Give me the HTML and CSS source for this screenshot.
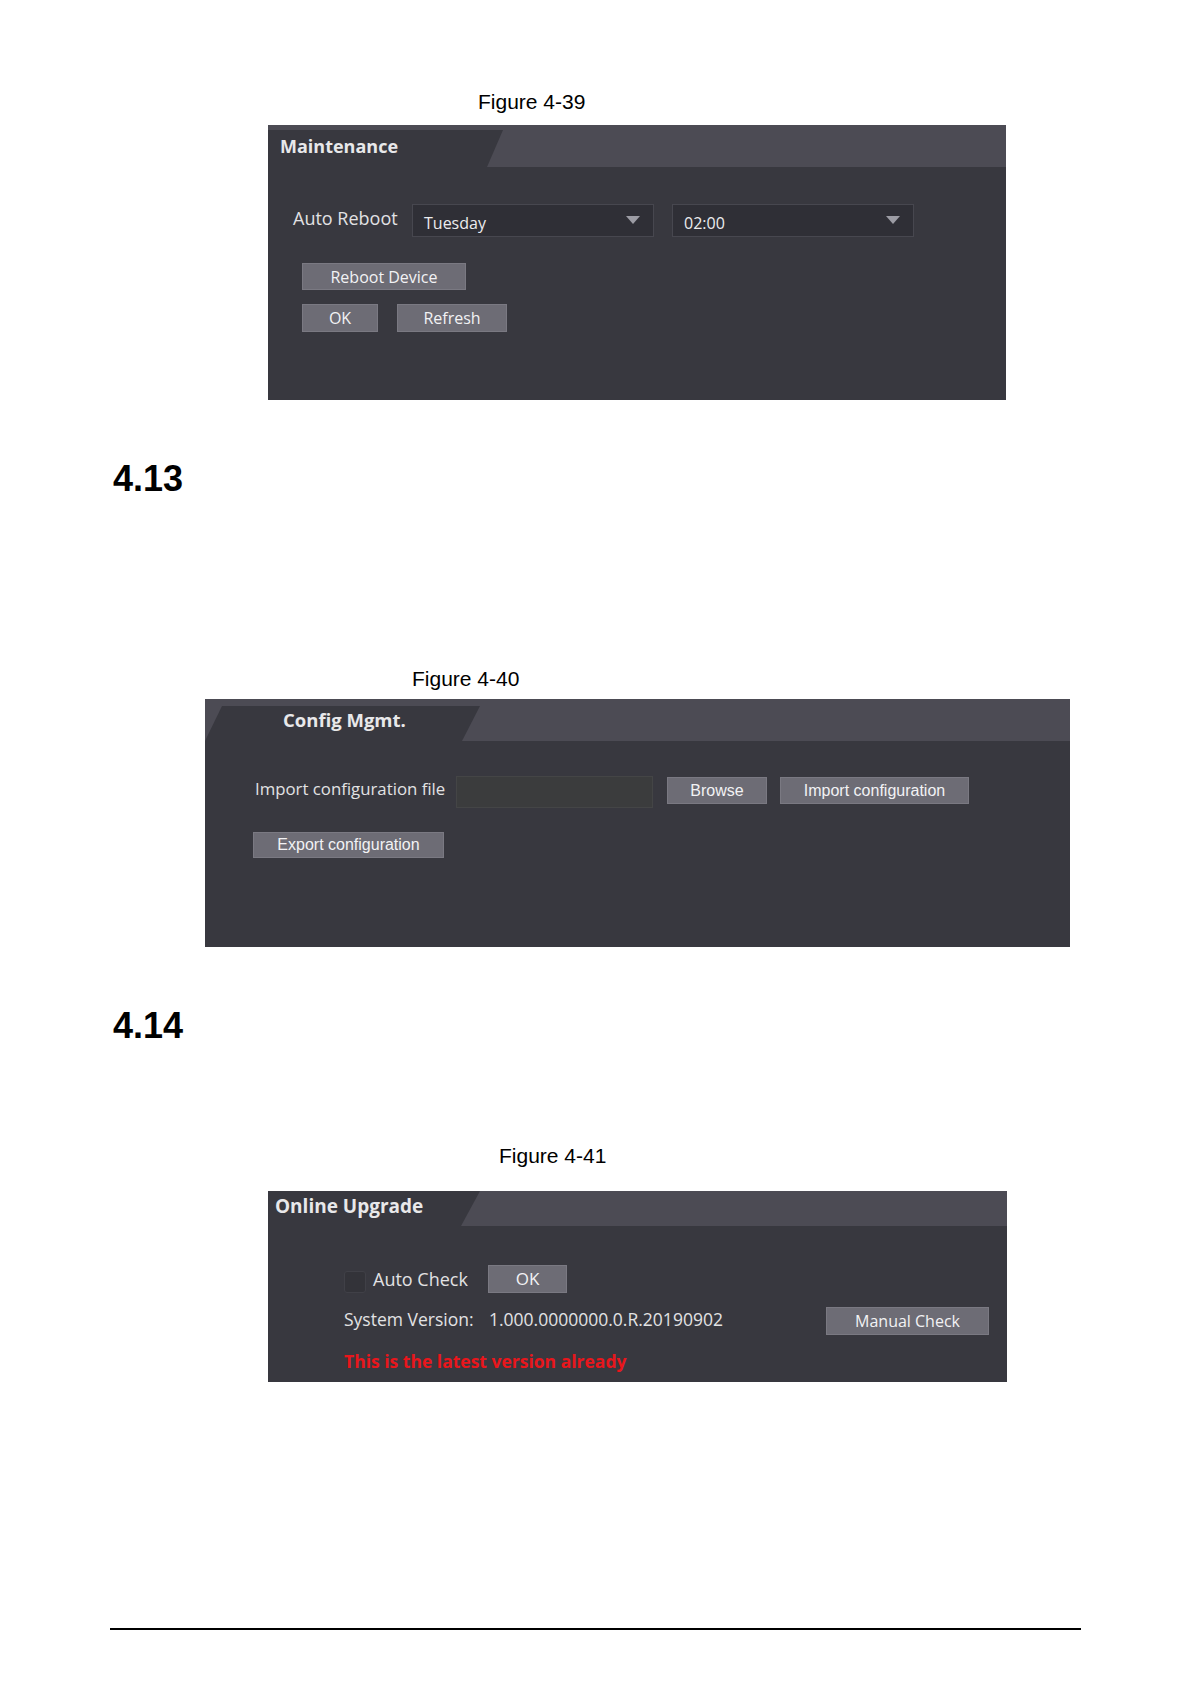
FILE: index.html
```html
<!DOCTYPE html>
<html lang="en">
<head>
<meta charset="utf-8">
<title>Maintenance / Config / Upgrade</title>
<link rel="stylesheet" href="styles.css">
</head>
<body>
<div class="page">
  <p class="caption cap-39">Figure 4-39</p>
  <section class="panel panel-maint">
    <div class="panel-head head-maint">
      <div class="tab tab-maint"><span class="title">Maintenance</span></div>
    </div>
    <div class="panel-body body-maint">
      <div class="row">
        <span class="label label-reboot">Auto Reboot</span>
        <div class="select"><span class="select-text">Tuesday</span><span class="arrow"></span></div>
        <div class="select select-time"><span class="select-text">02:00</span><span class="arrow"></span></div>
      </div>
      <div class="btn-group">
        <button class="btn btn-reboot">Reboot Device</button>
        <div class="btn-row">
          <button class="btn btn-ok">OK</button>
          <button class="btn btn-refresh">Refresh</button>
        </div>
      </div>
    </div>
  </section>

  <h2 class="section-num">4.13</h2>

  <p class="caption cap-40">Figure 4-40</p>
  <section class="panel panel-config">
    <div class="panel-head head-config">
      <div class="tab tab-config"><span class="title">Config Mgmt.</span></div>
    </div>
    <div class="panel-body body-config">
      <div class="row">
        <span class="label label-import">Import configuration file</span>
        <div class="file-input"></div>
        <button class="btn btn-arial btn-browse">Browse</button>
        <button class="btn btn-arial btn-import">Import configuration</button>
      </div>
      <button class="btn btn-arial btn-export">Export configuration</button>
    </div>
  </section>

  <h2 class="section-num">4.14</h2>

  <p class="caption cap-41">Figure 4-41</p>
  <section class="panel panel-upgrade">
    <div class="panel-head head-upgrade">
      <div class="tab tab-upgrade"><span class="title">Online Upgrade</span></div>
    </div>
    <div class="panel-body body-upgrade">
      <div class="row">
        <span class="checkbox"></span>
        <span class="label label-auto">Auto Check</span>
        <button class="btn btn-ok2">OK</button>
      </div>
      <div class="row row-version">
        <span class="label label-sys">System Version:</span>
        <span class="version">1.000.0000000.0.R.20190902</span>
        <button class="btn btn-manual">Manual Check</button>
      </div>
      <p class="notice">This is the latest version already</p>
    </div>
  </section>

  <div class="footer-rule"></div>
</div>
</body>
</html>
```

FILE: styles.css
```css
html, body {
  margin: 0;
  padding: 0;
  background: #ffffff;
}

.page {
  padding-top: 90px;
  padding-bottom: 40px;
}

.caption {
  margin: 0;
  font-family: "Liberation Sans", Arial, sans-serif;
  font-size: 21px;
  line-height: 24px;
  color: #000;
}
.cap-39 { margin: 0 0 0 478px; }
.cap-40 { margin: 168px 0 0 412px; }
.cap-41 { margin: 98px 0 0 499px; }

.section-num {
  margin: 59px 0 0 113px;
  font-family: "Liberation Sans", Arial, sans-serif;
  font-weight: bold;
  font-size: 36px;
  line-height: 40px;
  color: #000;
}

/* ---------- panels ---------- */
.panel {
  box-sizing: border-box;
  background: #38383f;
  color: #e6e6e8;
  font-family: "Open Sans", "Noto Sans", sans-serif;
  display: flex;
  flex-direction: column;
}
.panel-maint { margin: 11px 0 0 268px; width: 738px; height: 275px; }
.panel-config { margin: 8px 0 0 205px; width: 865px; height: 248px; }
.panel-upgrade { margin: 23px 0 0 268px; width: 739px; height: 191px; }

.panel-head {
  background: #4c4b54;
  display: flex;
  align-items: flex-start;
  flex: none;
}
.head-maint { height: 42px; }
.head-config { height: 42px; }
.head-upgrade { height: 35px; }

.tab {
  background: #38383f;
  box-sizing: border-box;
}
.tab-maint {
  margin-top: 5px;
  height: 37px;
  width: 235px;
  clip-path: polygon(0 0, 235px 0, 219px 100%, 0 100%);
  padding: 5px 0 0 12px;
}
.tab-config {
  margin-top: 7px;
  height: 35px;
  width: 275px;
  clip-path: polygon(17px 0, 275px 0, 257px 100%, 0 100%);
  padding: 3px 0 0 78px;
}
.tab-upgrade {
  height: 35px;
  width: 212px;
  clip-path: polygon(0 0, 212px 0, 193px 100%, 0 100%);
  padding: 4px 0 0 7px;
}

.title {
  display: block;
  font-weight: 700;
  font-size: 18px;
  line-height: 22px;
  color: #e8e8ea;
  white-space: nowrap;
}
.tab-config .title { font-size: 18.5px; }
.tab-upgrade .title { font-size: 19px; }

.row {
  display: flex;
  align-items: center;
}

.label {
  flex: none;
  white-space: nowrap;
  color: #e2e2e4;
}

/* ---------- buttons ---------- */
.btn {
  box-sizing: border-box;
  display: flex;
  align-items: center;
  justify-content: center;
  flex: none;
  margin: 0;
  padding: 0;
  background: #6d6c75;
  border: 1px solid #7a7982;
  color: #f2f2f4;
  font-family: "Open Sans", "Noto Sans", sans-serif;
  font-size: 16px;
  line-height: 20px;
  cursor: pointer;
}
.btn-arial {
  font-family: "Liberation Sans", Arial, sans-serif;
  font-size: 16px;
}

/* ---------- maintenance ---------- */
.body-maint { padding: 37px 0 0 25px; }
.label-reboot { width: 119px; font-size: 18px; line-height: 22px; margin-top: -5px; }

.select {
  box-sizing: border-box;
  width: 242px;
  height: 33px;
  background: #2f2f36;
  border: 1px solid #47474f;
  display: flex;
  align-items: center;
  padding: 4px 13px 0 11px;
}
.select-time { margin-left: 18px; }
.select-text {
  font-size: 16px;
  color: #ececee;
}
.arrow {
  margin-left: auto;
  width: 0;
  height: 0;
  border-left: 7.5px solid transparent;
  border-right: 7.5px solid transparent;
  border-top: 8px solid #9c9ca4;
  margin-top: -6px;
}

.btn-group {
  margin: 26px 0 0 9px;
  display: flex;
  flex-direction: column;
  align-items: flex-start;
  gap: 14px;
}
.btn-reboot { width: 164px; height: 27px; }
.btn-row { display: flex; gap: 19px; }
.btn-ok { width: 76px; height: 28px; }
.btn-refresh { width: 110px; height: 28px; }

/* ---------- config ---------- */
.body-config { padding: 35px 0 0 48px; }
.label-import {
  box-sizing: border-box;
  width: 203px;
  padding-left: 2px;
  font-size: 16.8px;
  line-height: 22px;
  margin-top: -6px;
}
.file-input {
  box-sizing: border-box;
  width: 197px;
  height: 32px;
  background: #3b3c3d;
  border: 1px solid #444546;
}
.btn-browse { width: 100px; height: 27px; margin-left: 14px; margin-top: -3px; }
.btn-import { width: 189px; height: 27px; margin-left: 13px; margin-top: -3px; }
.btn-export { width: 191px; height: 26px; margin-top: 24px; }

/* ---------- upgrade ---------- */
.body-upgrade { padding: 39px 18px 0 76px; }
.checkbox {
  box-sizing: border-box;
  flex: none;
  width: 22px;
  height: 22px;
  margin: 6px 7px 0 0;
  background: #333339;
  border: 1px solid #404047;
  border-radius: 3px;
}
.label-auto { width: 115px; font-size: 18px; line-height: 24px; }
.btn-ok2 { width: 79px; height: 28px; font-size: 17px; }

.row-version { margin-top: 14px; }
.label-sys { width: 145px; font-size: 17.5px; line-height: 24px; margin-top: -4px; }
.version { font-size: 17.5px; line-height: 24px; color: #e2e2e4; margin-top: -4px; white-space: nowrap; }
.btn-manual { margin-left: auto; width: 163px; height: 28px; }

.notice {
  margin: 14px 0 0 0;
  font-weight: 700;
  font-size: 17.5px;
  line-height: 24px;
  color: #e8161c;
  white-space: nowrap;
}

/* ---------- footer ---------- */
.footer-rule {
  margin: 246px 0 0 110px;
  width: 971px;
  height: 2px;
  background: #000;
}
```
